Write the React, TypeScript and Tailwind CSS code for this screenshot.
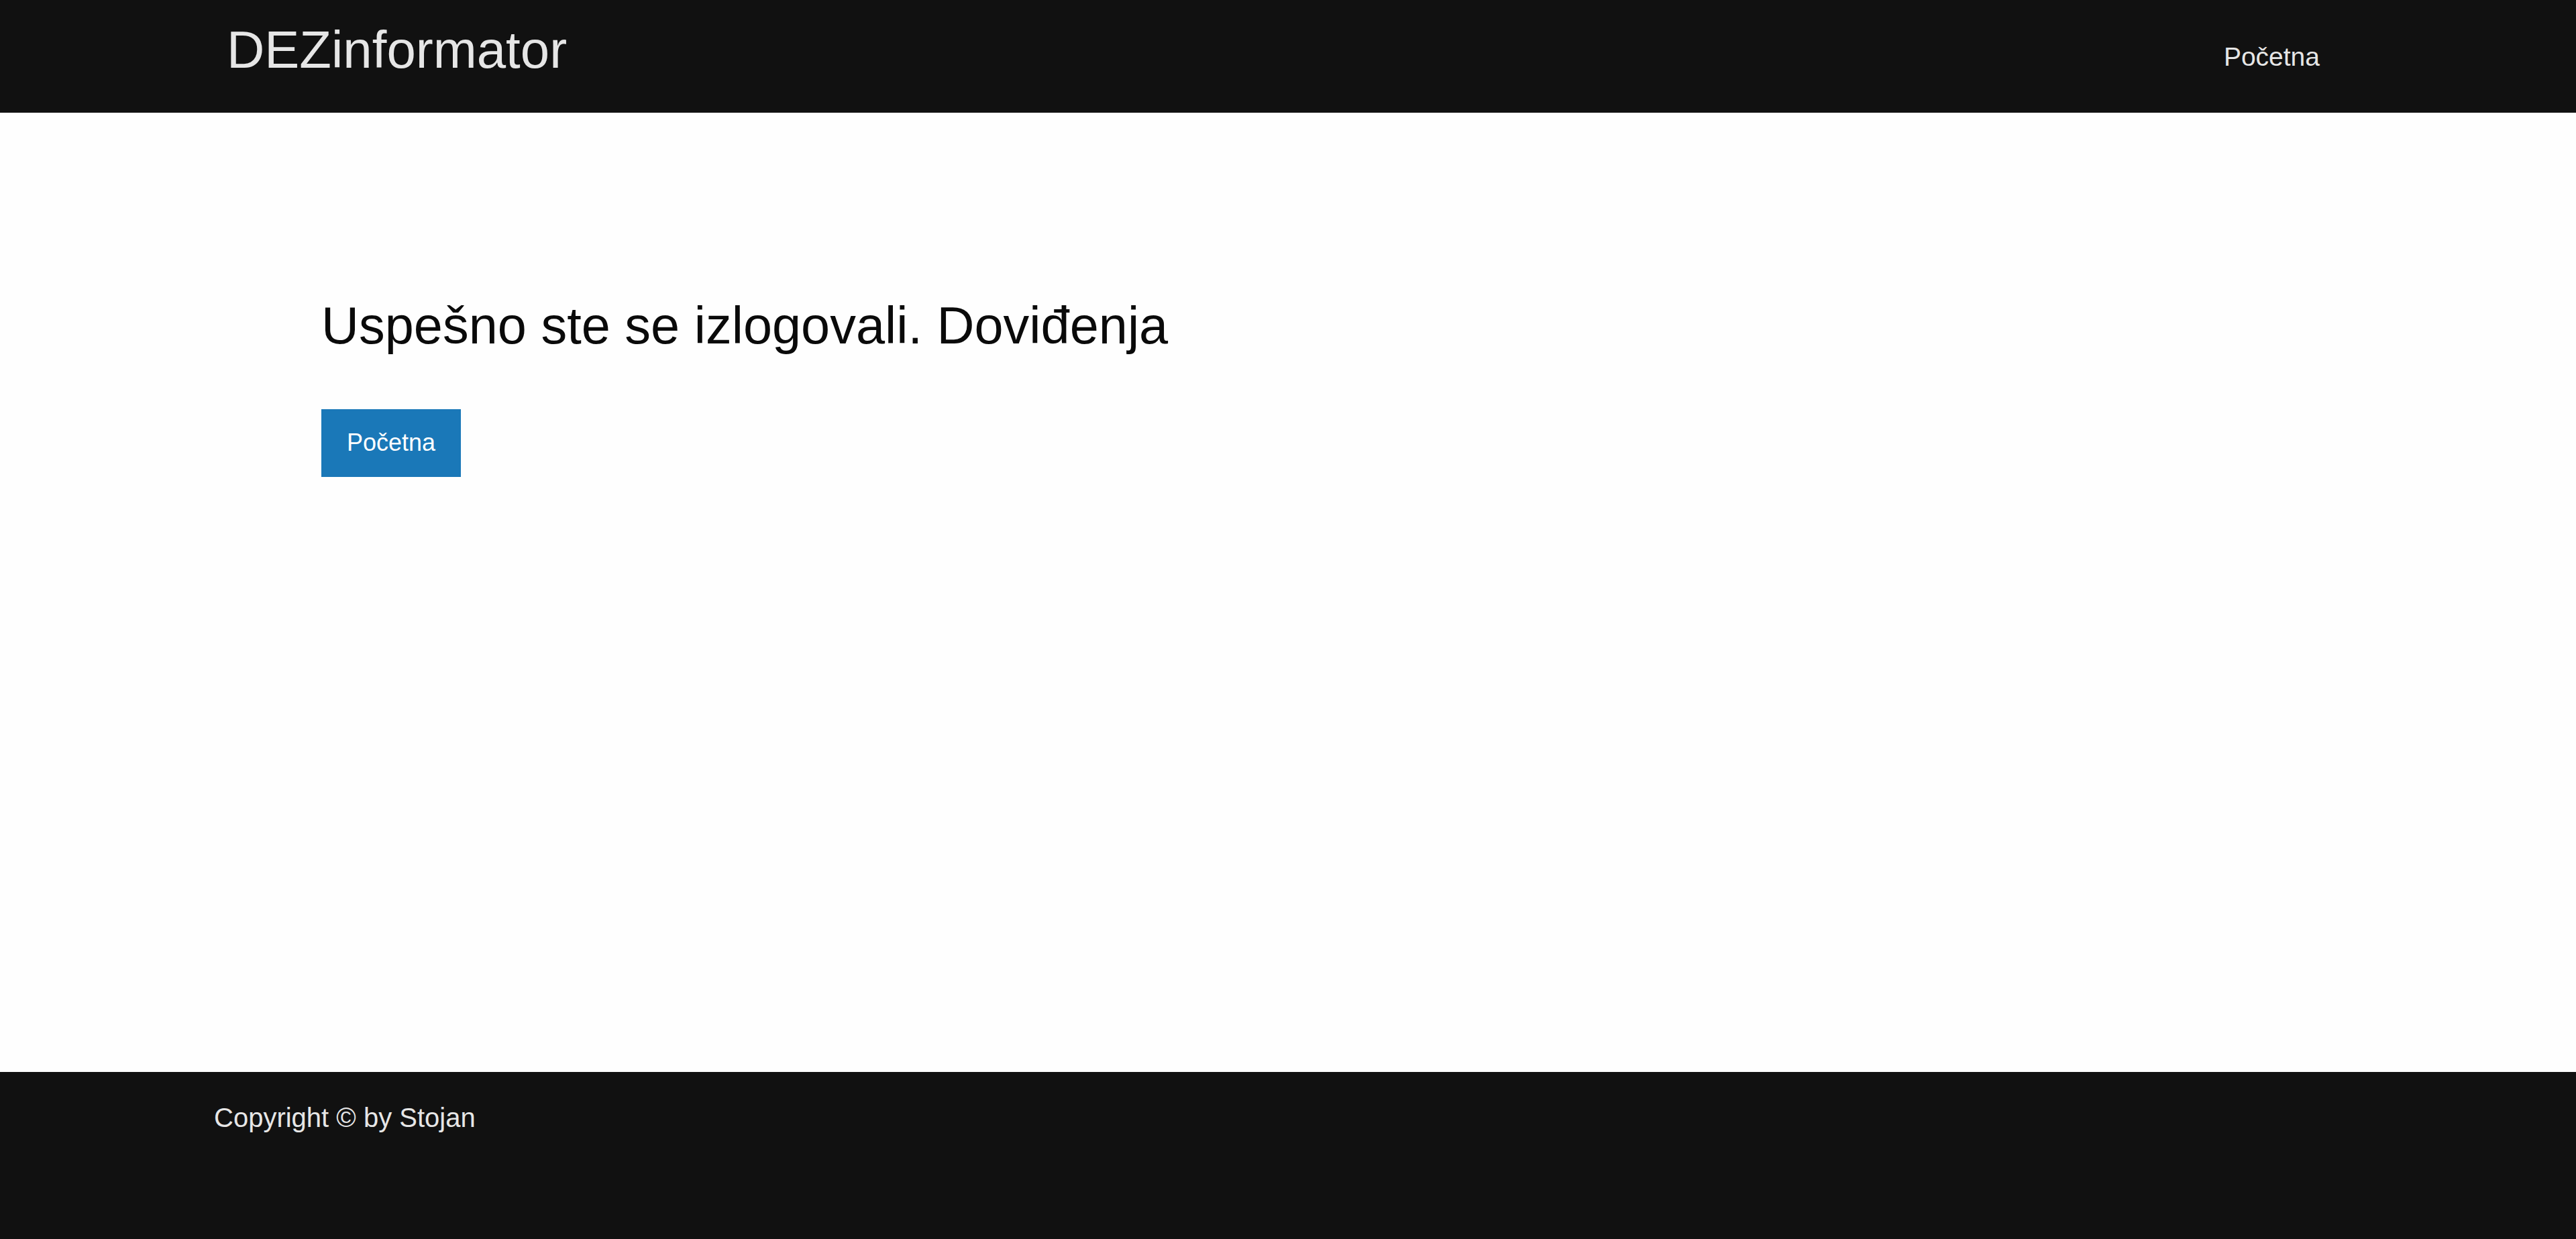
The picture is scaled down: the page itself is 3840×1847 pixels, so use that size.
const App = () => {
    return (
        <div className="min-h-screen flex flex-col bg-[#fefefe] font-['Liberation_Sans',Arial,sans-serif]">
            {/* header */}
            <header className="h-[168px] shrink-0 bg-[#111111] flex justify-between pl-[338px] pr-[382px]">
                <a href="#" className="pt-[35px] text-[78px] leading-none text-[#e6e6e6]">DEZinformator</a>
                <nav className="pt-[65px]">
                    <a href="#" className="text-[39px] leading-none text-[#e6e6e6]">Početna</a>
                </nav>
            </header>

            {/* content */}
            <main className="flex-1 pl-[479px] pt-[279px]">
                <h1 className="text-[77.5px] leading-none font-normal text-[#0a0a0a]">Uspešno ste se izlogovali. Doviđenja</h1>
                <button className="mt-[85px] px-[38px] py-[32.5px] bg-[#1a78b8] text-white text-[36px] leading-none">
                    Početna
                </button>
            </main>

            {/* footer */}
            <footer className="h-[249px] shrink-0 bg-[#111111] pl-[319px] pt-[48px]">
                <p className="text-[40px] leading-none text-[#e6e6e6]">Copyright © by Stojan</p>
            </footer>
        </div>
    )
}
export default App
